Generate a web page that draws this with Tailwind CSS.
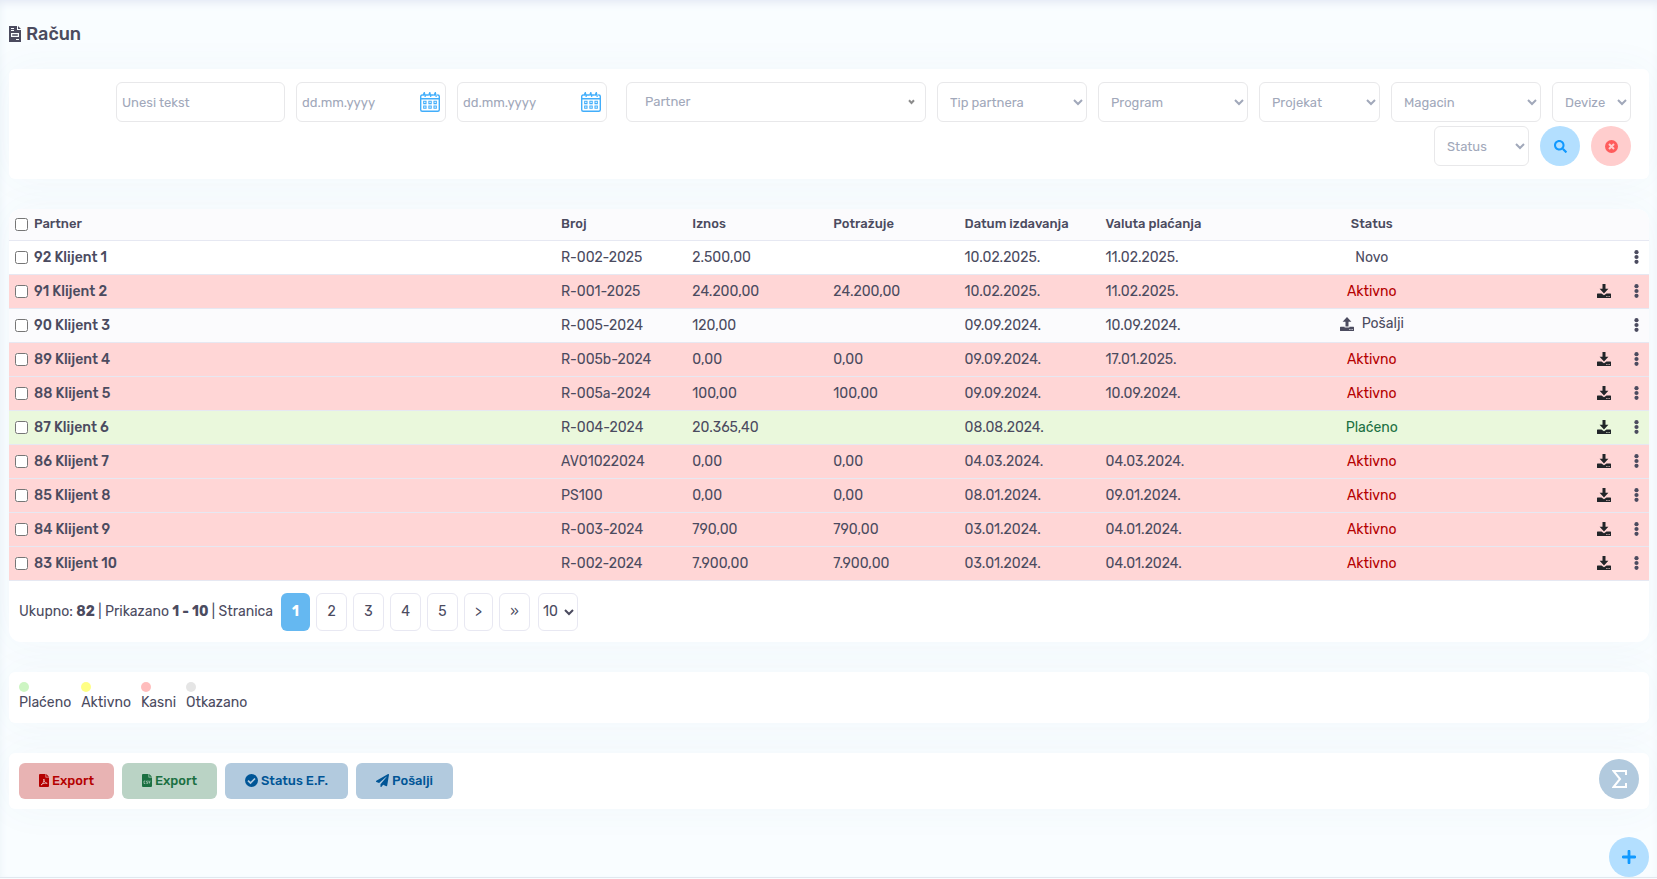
<!DOCTYPE html>
<html lang="sr-Latn">
<head>
  <meta charset="UTF-8" />
  <meta name="viewport" content="width=device-width, initial-scale=1.0" />
  <title>Račun</title>
  <script src="https://cdn.jsdelivr.net/npm/@tailwindcss/browser@4"></script>
</head>
<body class="bg-[#f9fdff] text-[#4b4b5f] text-sm leading-[21px] font-['Rubik','Roboto',sans-serif]">

  <svg class="hidden">
    <symbol id="i-calendar" viewBox="0 0 20 20">
      <g fill="none" stroke="currentColor" stroke-width="1.4">
        <path d="M2.8 3H2.2Q.7 3 .7 4.500V17.800Q.7 19.300 2.200 19.300H17.800Q19.300 19.300 19.300 17.800V4.500Q19.300 3 17.800 3H17.200" />
        <path d="M.7 6.800H19.300M3 3.600 4.300.700 5.300 4.800M5.500 3H8M8.500 3.600 9.800.700 10.800 4.800M11 3H13.500M14 3.600 15.300.700 16.300 4.800" />
        <path stroke-width="1.100" d="M3.700 9.300h2.300v2.300H3.700zM8.900 9.300h2.300v2.300H8.900zM14 9.300h2.300v2.300H14zM3.700 14h2.300v2.300H3.700zM8.900 14h2.300v2.300H8.900zM14 14h2.300v2.300H14z" />
      </g>
    </symbol>
    <symbol id="i-download" viewBox="0 0 14 14">
      <path fill="currentColor" d="M5.500 0h3v4.800h2.900L7 9.600 2.600 4.800h2.900zM.600 9.400h3.900L7 11.300l2.500-1.900h3.900q.6 0 .6.600v3.400q0 .600-.6.600H.600Q0 14 0 13.400v-3.400q0-.600.600-.600zM9.400 11.900v1h1v-1zm2.200 0v1h1v-1z" fill-rule="evenodd" />
    </symbol>
    <symbol id="i-upload" viewBox="0 0 14 14">
      <path fill="currentColor" d="M5.500 9.500h3V4.800h2.900L7 0 2.600 4.800h2.900zM.600 9.800H4.600v.700h4.800V9.800h4q.6 0 .6.600v3q0 .600-.6.600H.600Q0 14 0 13.400v-3Q0 9.800 .600 9.800zM9.400 11.900v1h1v-1zm2.200 0v1h1v-1z" fill-rule="evenodd" />
    </symbol>
    <symbol id="i-dots" viewBox="0 0 5 14">
      <g fill="currentColor"><circle cx="2.500" cy="2.200" r="2.100" /><circle cx="2.500" cy="7" r="2.100" /><circle cx="2.500" cy="11.800" r="2.100" /></g>
    </symbol>
  </svg>

  <main class="relative min-h-[calc(100vh-1px)] pl-[9px] pr-2 pb-17 border-b border-[#e1e8ef] shadow-[inset_0_9px_8px_-6px_#e4e9f5,inset_5px_0_6px_-3px_#f0f6fa,inset_-5px_0_6px_-3px_#f4f9fc]">

    <h1 class="flex items-center gap-[5px] h-[67px] mb-0.5 text-lg font-medium">
      <svg class="w-3 h-4" viewBox="0 0 12 16">
        <path fill="currentColor" fill-rule="evenodd" d="M0 0h8v4h4v12H0zM9 0l3 3H9zM2 2v1h3V2zM2 4v1h3V4zM2 7v4h8V7zM3.200 8.200h5.600v1.600H3.200zM7 13v1h3v-1z" />
      </svg>
      Račun
    </h1>

    <!-- Filteri -->
    <form id="filterForm" class="flex flex-wrap justify-end gap-x-[11px] gap-y-1 px-[18px] py-[13px] bg-white rounded-md shadow-[0_0_40px_#4a78a80b] text-[13px] leading-5 text-[#a1a8ba]">
      <input type="text" aria-label="Tekst" placeholder="Unesi tekst" class="w-[169px] h-10 px-[5px] border border-[#e8e8ea] rounded-md placeholder:text-[#a1a8ba]" />
      <div class="relative">
        <input type="text" aria-label="Datum od" placeholder="dd.mm.yyyy" class="w-[150px] h-10 px-[5px] border border-[#e8e8ea] rounded-md placeholder:text-[#a1a8ba]" />
        <svg class="absolute right-1.5 top-2.5 size-5 text-[#42aefb]"><use href="#i-calendar" /></svg>
      </div>
      <div class="relative">
        <input type="text" aria-label="Datum do" placeholder="dd.mm.yyyy" class="w-[150px] h-10 px-[5px] border border-[#e8e8ea] rounded-md placeholder:text-[#a1a8ba]" />
        <svg class="absolute right-1.5 top-2.5 size-5 text-[#42aefb]"><use href="#i-calendar" /></svg>
      </div>
      <div class="relative ml-2">
        <select aria-label="Partner" class="appearance-none w-[300px] h-10 px-[18px] border border-[#e8e8ea] rounded-md"><option>Partner</option></select>
        <svg class="absolute right-[11px] top-[17px] w-[7px] h-1.5" viewBox="0 0 7 6"><path d="M1 1.300 3.500 4 6 1.300" fill="none" stroke="#8c8c8c" stroke-width="2" /></svg>
      </div>
      <select aria-label="Tip partnera" class="w-[150px] h-10 pl-2 border border-[#e8e8ea] rounded-md"><option>Tip partnera</option></select>
      <select aria-label="Program" class="w-[150px] h-10 pl-2 border border-[#e8e8ea] rounded-md"><option>Program</option></select>
      <select aria-label="Projekat" class="w-[121px] h-10 pl-2 border border-[#e8e8ea] rounded-md"><option>Projekat</option></select>
      <select aria-label="Magacin" class="w-[150px] h-10 pl-2 border border-[#e8e8ea] rounded-md"><option>Magacin</option></select>
      <select aria-label="Devize" class="w-[79px] h-10 pl-2 border border-[#e8e8ea] rounded-md"><option>Devize</option></select>
      <select aria-label="Status" class="w-[95px] h-10 pl-2 border border-[#e8e8ea] rounded-md"><option>Status</option></select>
      <button type="submit" aria-label="Traži" class="flex items-center justify-center size-10 rounded-full bg-[#b3dfff] text-[#1199ff]">
        <svg class="size-[13px]" viewBox="0 0 512 512"><path fill="currentColor" d="M505 442.700L405.300 343c-4.500-4.500-10.600-7-17-7H372c27.600-35.300 44-79.700 44-128C416 93.100 322.900 0 208 0S0 93.100 0 208s93.100 208 208 208c48.300 0 92.700-16.400 128-44v16.300c0 6.400 2.500 12.500 7 17l99.700 99.700c9.400 9.400 24.600 9.400 33.900 0l28.300-28.300c9.400-9.400 9.400-24.600.1-34zM208 336c-70.700 0-128-57.200-128-128 0-70.700 57.200-128 128-128 70.700 0 128 57.200 128 128 0 70.700-57.200 128-128 128z" /></svg>
      </button>
      <button type="reset" aria-label="Poništi" class="flex items-center justify-center size-10 rounded-full bg-[#ffcdcd] text-[#ff5c5c]">
        <svg class="size-[13px]" viewBox="0 0 13 13"><circle cx="6.500" cy="6.500" r="6.500" fill="currentColor" /><path d="M4 4l5 5M9 4L4 9" stroke="#ffcdcd" stroke-width="2" /></svg>
      </button>
    </form>

    <!-- Lista racuna -->
    <section class="mt-[30px] bg-white rounded-xl overflow-hidden shadow-[0_0_40px_#4a78a80b]">
      <table class="w-full table-fixed text-left">
        <colgroup>
          <col class="w-[33.3%]" />
          <col class="w-[8%]" />
          <col class="w-[8.6%]" />
          <col class="w-[8%]" />
          <col class="w-[8.6%]" />
          <col class="w-[8.6%]" />
          <col class="w-[16%]" />
          <col />
          <col class="w-[26px]" />
        </colgroup>
        <thead>
          <tr class="h-[31px] bg-[#fbfbfd] border-b border-[#e6e8f2] text-[13px] leading-5 [&>th]:font-medium [&>th]:px-1.5">
            <th><label class="flex items-center gap-1.5"><input type="checkbox" id="checkAll" class="size-[13px]" />Partner</label></th>
            <th>Broj</th>
            <th>Iznos</th>
            <th>Potražuje</th>
            <th>Datum izdavanja</th>
            <th>Valuta plaćanja</th>
            <th class="text-center">Status</th>
            <th></th>
            <th></th>
          </tr>
        </thead>
        <tbody id="rows"></tbody>
      </table>

      <nav class="flex items-center gap-1.5 px-2.5 pt-3 pb-[11px]" aria-label="Stranice">
        <p>Ukupno: <b>82</b> | Prikazano <b>1 - 10</b> | Stranica</p>
        <button class="h-[38px] w-[29px] ml-0.5 rounded-md bg-[#65b8f1] text-white font-bold">1</button>
        <button class="h-[38px] w-[31px] border border-[#e8e8f2] rounded-md">2</button>
        <button class="h-[38px] w-[31px] border border-[#e8e8f2] rounded-md">3</button>
        <button class="h-[38px] w-[31px] border border-[#e8e8f2] rounded-md">4</button>
        <button class="h-[38px] w-[31px] border border-[#e8e8f2] rounded-md">5</button>
        <button class="h-[38px] w-[29px] border border-[#e8e8f2] rounded-md">&gt;</button>
        <button class="h-[38px] w-[31px] border border-[#e8e8f2] rounded-md">»</button>
        <select aria-label="Po stranici" class="h-[38px] w-10 ml-0.5 border border-[#e8e8f2] rounded-md"><option>10</option></select>
      </nav>
    </section>

    <!-- Legenda -->
    <ul class="flex gap-2.5 mt-[30px] p-2.5 bg-white rounded-md shadow-[0_0_40px_#4a78a80b]">
      <li><span class="block size-2.5 rounded-full bg-[#cdf5c3]"></span>Plaćeno</li>
      <li><span class="block size-2.5 rounded-full bg-[#ffff85]"></span>Aktivno</li>
      <li><span class="block size-2.5 rounded-full bg-[#ffbdbd]"></span>Kasni</li>
      <li><span class="block size-2.5 rounded-full bg-[#e5e5e5]"></span>Otkazano</li>
    </ul>

    <!-- Akcije -->
    <div class="flex items-center gap-2 mt-[30px] h-14 px-2.5 bg-white rounded-md shadow-[0_0_40px_#4a78a80b] text-[13px] leading-5 font-medium">
      <button class="flex items-center justify-center gap-[3px] w-[95px] h-9 rounded-md bg-[#e8b3b3] text-[#b50000]">
        <svg class="w-2.5 h-[13px]" viewBox="0 0 10 13"><path fill="currentColor" d="M1 0h5.500v3.500H10V12q0 1-1 1H1q-1 0-1-1V1q0-1 1-1zM7.200 0 10 2.800H7.200z" /><path d="M2 11c2-1 3.200-4 2.800-6 .2 2.500 1.400 4.200 3.400 4.300C6 8.800 4 9.300 2 11z" fill="none" stroke="#e8b3b3" stroke-width=".9" /></svg>
        Export
      </button>
      <button class="flex items-center justify-center gap-[3px] w-[95px] h-9 rounded-md bg-[#bad3c5] text-[#1b7042]">
        <svg class="w-2.5 h-[13px]" viewBox="0 0 10 13"><path fill="currentColor" d="M1 0h5.500v3.500H10V12q0 1-1 1H1q-1 0-1-1V1q0-1 1-1zM7.200 0 10 2.800H7.200z" /><path d="M3.300 7H2v2.500h1.300M5.700 7H4.600v1.200h1v1.300H4.400M6.700 6.700l.7 2.600.7-2.600" fill="none" stroke="#bad3c5" stroke-width=".7" /></svg>
        Export
      </button>
      <button class="flex items-center justify-center gap-[3px] w-[123px] h-9 rounded-md bg-[#b2cade] text-[#005596]">
        <svg class="size-[13px]" viewBox="0 0 13 13"><circle cx="6.500" cy="6.500" r="6.500" fill="currentColor" /><path d="M3 6.700 5.500 9 10 4.500" fill="none" stroke="#b2cade" stroke-width="1.700" /></svg>
        Status E.F.
      </button>
      <button class="flex items-center justify-center gap-[3px] w-[97px] h-9 rounded-md bg-[#b2cade] text-[#005596]">
        <svg class="size-[13px]" viewBox="0 0 512 512"><path fill="currentColor" d="M476 3.200L12.500 270.600c-18.100 10.400-15.800 35.600 2.200 43.200L121 358.400l287.300-253.200c5.500-4.900 13.300 2.600 8.600 8.300L176 407v80.500c0 23.600 28.500 32.900 42.500 15.800L282 426l124.600 52.200c14.200 6 30.400-2.900 33-18.200l72-432C515 7.800 493.300-6.800 476 3.200z" /></svg>
        Pošalji
      </button>
      <button aria-label="Zbir" class="flex items-center justify-center size-10 ml-auto mb-1 rounded-full bg-[#b2cade]">
        <svg class="w-[15px] h-[18px]" viewBox="0 0 15 18"><path d="M14 5V1H1.500L8 9l-6.500 8H14v-4" fill="none" stroke="#fff" stroke-width="2" /></svg>
      </button>
    </div>

    <a href="#" aria-label="Dodaj" class="fixed right-2 bottom-0.5 flex items-center justify-center size-10 rounded-full bg-[#b3dfff]">
      <svg class="size-3.5" viewBox="0 0 14 14"><path d="M7 1.200v11.600M1.200 7h11.600" stroke="#1199ff" stroke-width="2.800" stroke-linecap="round" /></svg>
    </a>
  </main>

  <script>
    // partner, broj, iznos, potrazuje, izdato, valuta, status
    const racuni = [
      ['92 Klijent 1', 'R-002-2025', '2.500,00', '', '10.02.2025.', '11.02.2025.', 'Novo'],
      ['91 Klijent 2', 'R-001-2025', '24.200,00', '24.200,00', '10.02.2025.', '11.02.2025.', 'Aktivno'],
      ['90 Klijent 3', 'R-005-2024', '120,00', '', '09.09.2024.', '10.09.2024.', 'Pošalji'],
      ['89 Klijent 4', 'R-005b-2024', '0,00', '0,00', '09.09.2024.', '17.01.2025.', 'Aktivno'],
      ['88 Klijent 5', 'R-005a-2024', '100,00', '100,00', '09.09.2024.', '10.09.2024.', 'Aktivno'],
      ['87 Klijent 6', 'R-004-2024', '20.365,40', '', '08.08.2024.', '', 'Plaćeno'],
      ['86 Klijent 7', 'AV01022024', '0,00', '0,00', '04.03.2024.', '04.03.2024.', 'Aktivno'],
      ['85 Klijent 8', 'PS100', '0,00', '0,00', '08.01.2024.', '09.01.2024.', 'Aktivno'],
      ['84 Klijent 9', 'R-003-2024', '790,00', '790,00', '03.01.2024.', '04.01.2024.', 'Aktivno'],
      ['83 Klijent 10', 'R-002-2024', '7.900,00', '7.900,00', '03.01.2024.', '04.01.2024.', 'Aktivno']
    ];

    const rowColor = { 'Novo': 'bg-white', 'Pošalji': 'bg-[#fbfbfd]', 'Aktivno': 'bg-[#ffd6d6]', 'Plaćeno': 'bg-[#eaf8dc]' };
    const textColor = { 'Novo': '', 'Pošalji': '', 'Aktivno': 'text-[#b50000]', 'Plaćeno': 'text-[#1b7042]' };

    document.getElementById('rows').innerHTML = racuni.map(([partner, broj, iznos, potrazuje, izdato, valuta, status]) => `
      <tr class="h-[34px] border-b border-[#e6e8f2] ${rowColor[status]} [&>td]:px-1.5">
        <td><label class="flex items-center gap-1.5 font-medium"><input type="checkbox" class="size-[13px]" />${partner}</label></td>
        <td>${broj}</td>
        <td>${iznos}</td>
        <td>${potrazuje}</td>
        <td>${izdato}</td>
        <td>${valuta}</td>
        <td class="text-center ${textColor[status]}">${status === 'Pošalji'
          ? '<button class="inline-flex items-center gap-2"><svg class="size-3.5"><use href="#i-upload" /></svg>Pošalji</button>'
          : status}</td>
        <td>${status === 'Aktivno' || status === 'Plaćeno'
          ? '<button aria-label="Preuzmi" class="block ml-auto mr-1.5 text-[#212529]"><svg class="size-3.5"><use href="#i-download" /></svg></button>'
          : ''}</td>
        <td><button aria-label="Meni" class="block mx-auto"><svg class="w-[5px] h-3.5"><use href="#i-dots" /></svg></button></td>
      </tr>`).join('');

    document.getElementById('checkAll').addEventListener('change', (e) => {
      document.querySelectorAll('#rows input').forEach((box) => box.checked = e.target.checked);
    });
  </script>
</body>
</html>
